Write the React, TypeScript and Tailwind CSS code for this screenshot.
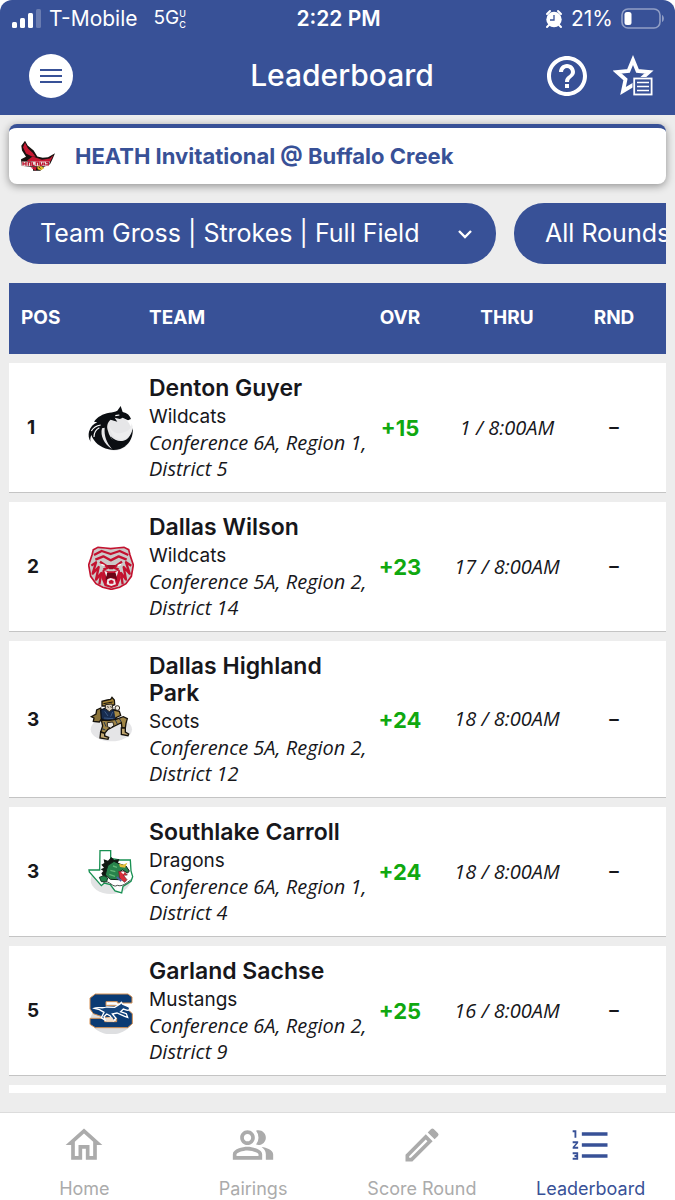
import type { ReactNode } from "react";
import {
  MdFormatListNumbered,
  MdHelpOutline,
  MdOutlineHome,
  MdOutlineModeEdit,
  MdOutlinePeopleAlt,
} from "react-icons/md";

interface Team {
  pos: number;
  name: string;
  mascot: string;
  division: string;
  overall: string;
  thru: string;
  logo: ReactNode;
}

function GuyerLogo() {
  return (
    <svg viewBox="24 30 138 138" className="size-[46px]" aria-hidden="true">
      <circle cx="103" cy="114" r="53" fill="#e6e6e8" />
      <path d="M27 110 C31 96 40 87 52 82 L42 80 C52 66 68 56 88 53 C97 52 106 50 112 47 L122 33 L128 51 C142 54 150 62 153 72 L144 76 L128 68 L120 72 L104 68 L112 80 L92 74 C82 82 79 94 84 108 C90 132 108 150 138 152 C124 163 104 168 86 163 C60 157 42 142 34 120 C30 130 30 136 33 142 C25 130 25 119 27 110Z" fill="#0b0e12" />
      <path d="M158 98 C161 122 150 144 134 154 C112 152 98 142 92 124 C104 138 124 142 138 134 C150 126 156 112 158 98Z" fill="#0b0e12" />
      <path d="M88 92 C94 110 112 120 132 112 C146 108 154 98 155 84 L158 96 C154 120 142 132 126 134 C106 134 90 116 88 92Z" fill="#ededee" />
      <path d="M66 100 C60 122 72 148 96 162 C80 142 72 124 74 98Z" fill="#e6e6e8" />
      <path d="M34 108 C40 98 50 92 62 90 M42 126 C42 112 48 103 58 98 M106 62 L118 60" fill="none" stroke="#fff" strokeWidth="3.5" />
    </svg>
  );
}

function WilsonLogo() {
  return (
    <svg viewBox="24 27 138 138" className="size-[46px]" aria-hidden="true">
      <path d="M40 44 L54 37 L76 39 L92 41 L109 39 L132 37 L146 44 L150 60 L160 90 L154 124 L138 146 L119 157 L94 163 L68 157 L48 146 L32 124 L26 90 L36 60Z" fill="#cbcac9" stroke="#c3122f" strokeWidth="5" />
      <g fill="none" stroke="#c3122f" strokeWidth="7" strokeLinejoin="round">
        <path d="M42 60 L65 48 L92 57 L119 48 L145 60" />
        <path d="M46 74 L70 64 L92 76 L116 64 L140 74" />
        <path d="M60 80 L78 92 L84 98 L70 104 M126 80 L109 92 L102 98 L116 104" />
        <path d="M34 92 L48 82 L38 116 L56 96 L48 134 L64 114 L58 148" />
        <path d="M154 92 L138 82 L149 116 L131 96 L138 134 L123 114 L128 148" />
      </g>
      <path d="M80 90 L107 90 L99 103 L88 103Z" fill="#9f1029" />
      <path d="M68 104 L86 109 L101 109 L119 104 L123 128 L113 153 L94 159 L74 153 L64 128Z" fill="#c3122f" />
      <path d="M78 114 L109 114 L111 137 L104 130 L86 130 L77 137Z" fill="#6b0718" />
      <path d="M73 107 L82 111 L79 125Z M106 111 L115 107 L110 125Z M82 133 L92 129 L104 133 L108 148 L94 153 L80 148Z" fill="#eee" />
      <path d="M86 138 L94 134 L101 138 L100 146 L88 146Z" fill="#c3122f" />
      <path d="M64 88 L74 92 M113 92 L123 88" stroke="#fff" strokeWidth="4" />
    </svg>
  );
}

function HighlandLogo() {
  return (
    <svg viewBox="24 30 138 138" className="size-[46px]" aria-hidden="true">
      <ellipse cx="94" cy="130" rx="62" ry="36" fill="#e5e5e7" />
      <path d="M62 66 L50 72 L48 84 L34 92 L42 96 L40 106 L58 108 L70 92Z" fill="#8b743b" stroke="#17130c" strokeWidth="4" />
      <path d="M62 72 L78 66 L104 72 L112 84 L106 104 L78 108 L64 98Z" fill="#172c4f" stroke="#0b101a" strokeWidth="4" />
      <path d="M66 60 L66 46 L82 42 L92 40 L96 34 L103 42 L104 56 L92 60Z" fill="#a88635" stroke="#19150e" strokeWidth="4" />
      <path d="M76 56 L96 54 L99 68 L88 77 L76 68Z" fill="#d8cdbb" stroke="#2b251a" strokeWidth="3" />
      <path d="M102 72 L118 76 L122 88 L106 96" fill="#a68a45" stroke="#17130c" strokeWidth="4" />
      <circle cx="112" cy="66" r="7" fill="#f4efe4" stroke="#33291c" strokeWidth="3" />
      <path d="M64 102 L84 104 L108 100 L130 92 L142 98 L138 112 L136 126 L126 126 L124 110 L104 120 L84 130 L74 142 L62 138 L68 120Z" fill="#a08546" stroke="#17130c" strokeWidth="4" />
      <path d="M124 126 L136 126 L136 138 L146 144 L144 149 L124 145Z M62 138 L74 142 L74 150 L86 154 L84 160 L60 156Z" fill="#c0a670" stroke="#17130c" strokeWidth="4" />
      <path d="M82 110 L98 108 L102 118 L92 126 L82 122Z" fill="#e9e5dc" stroke="#25201a" strokeWidth="3" />
      <path d="M72 108 L78 122 M106 102 L112 114 M118 98 L124 108 M66 128 L76 132" stroke="#28384f" strokeWidth="3" fill="none" />
      <path d="M74 76 L84 90 M98 78 L92 92 M72 96 L100 98" stroke="#3d5b86" strokeWidth="3" fill="none" />
      <path d="M70 53 L98 48 M82 62 L86 64 M91 62 L95 64" stroke="#19150e" strokeWidth="3" />
    </svg>
  );
}

function CarrollLogo() {
  return (
    <svg viewBox="24 25 138 138" className="size-[46px]" aria-hidden="true">
      <ellipse cx="92" cy="118" rx="60" ry="42" fill="#e2e3e4" />
      <path d="M60 30 L92 30 L92 53 L118 58 L151 58 L153 91 L158 108 L153 122 L129 137 L125 157 L105 151 L91 132 L73 127 L64 135 L51 120 L28 94 L27 88 L59 88Z" fill="#fff" stroke="#189052" strokeWidth="4" />
      <path d="M64 72 L73 67 L71 56 L84 60 L94 49 L103 58 L118 55 L114 67 L130 74 L108 75 L93 87 L82 108 L70 110 L64 98 L70 91 L62 86 L72 81Z" fill="#121913" />
      <path d="M84 74 L102 62 L119 70 L138 76 L148 91 L143 97 L127 88 L118 94 L131 107 L116 117 L91 116 L76 103 L80 86Z" fill="#28834c" stroke="#102017" strokeWidth="3" />
      <path d="M99 76 L111 80 M91 89 L106 93 M88 101 L105 107" stroke="#63b878" strokeWidth="4" />
      <path d="M117 69 L130 72 L142 66 L135 81 L120 79Z" fill="#e5bd38" />
      <path d="M116 92 L134 94 L142 103 L130 104 L141 117 L134 125 L119 113Z" fill="#d92d3a" stroke="#662029" strokeWidth="2" />
      <path d="M122 93 L130 101 L134 94" fill="#fff" />
      <path d="M110 109 L124 121" stroke="#4a65a2" strokeWidth="5" />
      <path d="M58 110 L72 105 L83 112 L80 123 L64 123Z" fill="#23844b" stroke="#143b24" strokeWidth="3" />
      <path d="M70 125 C89 116 98 144 112 134 C127 139 139 127 152 118" fill="none" stroke="#454b47" strokeWidth="3" />
    </svg>
  );
}

function SachseLogo() {
  return (
    <svg viewBox="24 21 138 138" className="size-[46px]" aria-hidden="true">
      <ellipse cx="94" cy="115" rx="62" ry="45" fill="#dedfe1" />
      <path d="M46 39 H144 L156 48 V66 H112 V62 H78 V74 H119 L144 86 L157 98 V128 L143 140 H46 L30 130 V112 H74 V122 H110 V112 L69 108 L40 98 L30 84 V51Z" fill="#0b3b73" stroke="#d69254" strokeWidth="3" />
      <path d="M42 82 C54 76 66 84 80 78 L104 79 L120 69 L124 64 L128 70 L147 78 L150 86 L142 88 L130 84 L122 92 L139 98 L143 109 L134 106 L111 96 L97 99 L108 112 L100 120 L90 104 L80 99 L72 107 L76 118 L64 110 L72 94 L58 86Z" fill="#14457e" stroke="#fff" strokeWidth="4" />
      <path d="M80 110 L96 108 L104 122 H80Z" fill="#f3dfcb" />
    </svg>
  );
}

function CardinalLogo() {
  return (
    <svg viewBox="27 27 111 95" className="h-8 w-[37px]" aria-hidden="true">
      <path d="M45 29 L53 43 L71 58 L82 76 L98 80 L114 78 L135 66 L127 85 L120 99 L103 107 L91 119 L69 119 L69 108 L35 104 L33 84 L48 77 L36 58 L34 44Z" fill="#17110f" />
      <path d="M45 35 L54 52 L68 65 L77 77 L66 76 L48 67 L39 48Z" fill="#c71832" />
      <path d="M68 76 L96 86 L119 82 L130 72 L121 91 L92 95 L50 89Z" fill="#c71832" />
      <path d="M35 91 H120 L116 105 H35Z" fill="#e9dcd9" />
      <path d="M39 92 V103 M39 98 H48 V92 V104 M55 104 V93 H62 V104 M67 93 V103 H74 M79 103 V93 H86 V103 M91 93 V103 L98 101 V94 M103 94 V103 M108 94 H115 V101 H106" stroke="#be1b35" strokeWidth="4" fill="none" />
      <path d="M82 106 L94 105 L103 111 L92 117 L83 114Z" fill="#e4c02d" />
      <path d="M62 109 L80 107 L77 119Z" fill="#c71832" />
      <path d="M87 108 L91 112" stroke="#17110f" strokeWidth="3" />
    </svg>
  );
}

const TEAMS: Team[] = [
  { pos: 1, name: "Denton Guyer", mascot: "Wildcats", division: "Conference 6A, Region 1, District 5", overall: "+15", thru: "1 / 8:00AM", logo: <GuyerLogo /> },
  { pos: 2, name: "Dallas Wilson", mascot: "Wildcats", division: "Conference 5A, Region 2, District 14", overall: "+23", thru: "17 / 8:00AM", logo: <WilsonLogo /> },
  { pos: 3, name: "Dallas Highland Park", mascot: "Scots", division: "Conference 5A, Region 2, District 12", overall: "+24", thru: "18 / 8:00AM", logo: <HighlandLogo /> },
  { pos: 3, name: "Southlake Carroll", mascot: "Dragons", division: "Conference 6A, Region 1, District 4", overall: "+24", thru: "18 / 8:00AM", logo: <CarrollLogo /> },
  { pos: 5, name: "Garland Sachse", mascot: "Mustangs", division: "Conference 6A, Region 2, District 9", overall: "+25", thru: "16 / 8:00AM", logo: <SachseLogo /> },
];

const TABS = [
  { label: "Home", icon: MdOutlineHome },
  { label: "Pairings", icon: MdOutlinePeopleAlt },
  { label: "Score Round", icon: MdOutlineModeEdit },
  { label: "Leaderboard", icon: MdFormatListNumbered },
];

function StatusBar() {
  return (
    <div className="grid h-[37px] grid-cols-[1fr_auto_1fr] items-center pl-3 pr-[10px] text-[21px]">
      <div className="flex items-center">
        <svg viewBox="0 0 30 20" className="h-5 w-[30px]" fill="#fff" aria-hidden="true">
          <rect x="0" y="13" width="5" height="6" rx="1.5" />
          <rect x="8" y="9" width="5" height="10" rx="1.5" />
          <rect x="16" y="4" width="5" height="15" rx="1.5" />
          <rect x="24" y="0" width="5" height="19" rx="1.5" opacity="0.25" />
        </svg>
        <span className="ml-[7px]">T-Mobile</span>
        <span className="ml-4 text-[19px]">5G</span>
        <span className="flex flex-col text-[9px] font-medium leading-[11px]">
          <span>U</span>
          <span>C</span>
        </span>
      </div>
      <div className="font-semibold">2:22 PM</div>
      <div className="flex items-center justify-end">
        <svg viewBox="0 0 18 20" className="h-5 w-[18px]" aria-hidden="true">
          <path d="M2 5 L5 2 M16 5 L13 2 M4 16 L2 18 M14 16 L16 18" stroke="#fff" strokeWidth="2" strokeLinecap="round" />
          <circle cx="9" cy="10.5" r="7.7" fill="#fff" />
          <path d="M9 6 V11 H5" fill="none" stroke="#385197" strokeWidth="1.3" />
        </svg>
        <span className="ml-2">21%</span>
        <svg viewBox="0 0 44 22" className="ml-2 h-[22px] w-11" aria-hidden="true">
          <rect x="1" y="1" width="38" height="19" rx="6" fill="none" stroke="#fff" strokeWidth="1.6" opacity="0.45" />
          <path d="M41 7 C43.5 8 43.5 13 41 14Z" fill="#fff" opacity="0.45" />
          <rect x="3.5" y="4" width="7" height="13" rx="2.5" fill="#fff" />
        </svg>
      </div>
    </div>
  );
}

function Header() {
  return (
    <header className="shrink-0 rounded-t-xl bg-[#385197] text-white">
      <StatusBar />
      <div className="grid h-[78px] grid-cols-[1fr_auto_1fr] items-center pl-[29px] pr-5">
        <button aria-label="Menu" className="flex size-11 items-center justify-center rounded-full bg-white">
          <svg viewBox="0 0 22 16" className="h-4 w-[22px]" aria-hidden="true">
            <path d="M0 2 H22 M0 8 H22 M0 14 H22" stroke="#385197" strokeWidth="2" />
          </svg>
        </button>
        <h1 className="pb-[2px] text-[30px] font-medium leading-9">Leaderboard</h1>
        <div className="flex items-center justify-end gap-[22px]">
          <button aria-label="Help">
            <MdHelpOutline className="size-12" />
          </button>
          <button aria-label="Favorites">
            <svg viewBox="0 0 42 42" className="size-[42px]" aria-hidden="true">
              <path d="M20 5 L24.5 16 L36 17 L27.5 24.5 L30 36 L20 30 L10 36 L12.5 24.5 L4 17 L15.5 16Z" fill="none" stroke="#fff" strokeWidth="3.8" />
              <rect x="19.5" y="22" width="21" height="20" fill="#385197" />
              <rect x="21.2" y="23.5" width="17.4" height="16" fill="#385197" stroke="#fff" strokeWidth="1.8" />
              <path d="M24 27.5 H36 M24 31.5 H36 M24 35.5 H36" stroke="#fff" strokeWidth="1.7" />
            </svg>
          </button>
        </div>
      </div>
    </header>
  );
}

function FilterSelect({ label, value, width }: { label: string; value: string; width: string }) {
  return (
    <div className={`relative shrink-0 ${width}`}>
      <select
        aria-label={label}
        className="h-[61px] w-full appearance-none rounded-[30px] bg-[#385197] pl-[31px] pr-14 text-[25px] text-white"
      >
        <option>{value}</option>
      </select>
      <svg viewBox="0 0 16 10" className="pointer-events-none absolute right-[23px] top-[26px] h-[10px] w-4" aria-hidden="true">
        <path d="M2 2 L8 8 L14 2" fill="none" stroke="#fff" strokeWidth="2.4" />
      </svg>
    </div>
  );
}

function TeamRow({ team }: { team: Team }) {
  const cell = "border-b border-[#c4c4c4] bg-white";
  return (
    <tr>
      <td className={`${cell} pl-[18px] pt-[2px] text-[19px] font-bold`}>{team.pos}</td>
      <td className={cell}>{team.logo}</td>
      <td className={`${cell} pb-[10px] pt-3 text-[19px] leading-[26px]`}>
        <p className="mb-[2px] text-[23px] font-semibold leading-[27px]">{team.name}</p>
        <p>{team.mascot}</p>
        <p className="font-['Open_Sans',sans-serif] text-xl leading-[26px] italic">{team.division}</p>
      </td>
      <td className={`${cell} pt-[2px] text-center text-[22px] font-bold text-[#10a810]`}>{team.overall}</td>
      <td className={`${cell} text-center font-['Open_Sans',sans-serif] text-xl italic`}>{team.thru}</td>
      <td className={`${cell} pr-5 pt-[2px] text-center text-[19px] font-semibold`}>–</td>
    </tr>
  );
}

export default function App() {
  return (
    <div className="flex h-screen flex-col overflow-hidden bg-white font-['Inter',sans-serif] text-[#17171b]">
      <Header />

      <main className="flex min-h-0 flex-1 flex-col bg-[#ededed] px-[9px] pb-[19px] pt-[9px]">
        <section className="flex h-[60px] shrink-0 items-center gap-[19px] rounded-lg border-t-4 border-[#385197] bg-white pl-[10px] shadow-[0_2px_8px_rgba(0,0,0,0.4)]">
          <CardinalLogo />
          <h2 className="text-[22px] font-bold text-[#385197]">HEATH Invitational @ Buffalo Creek</h2>
        </section>

        <div className="mt-[19px] flex shrink-0 gap-[18px] overflow-hidden">
          <FilterSelect label="Scoring format" value="Team Gross | Strokes | Full Field" width="w-[487px]" />
          <FilterSelect label="Round" value="All Rounds" width="w-[230px]" />
        </div>

        <div className="mt-[10px] min-h-0 flex-1 overflow-hidden">
          <table className="w-full table-fixed border-separate border-spacing-x-0 border-spacing-y-[9px]">
            <colgroup>
              <col className="w-[79px]" />
              <col className="w-[61px]" />
              <col />
              <col className="w-16" />
              <col className="w-[150px]" />
              <col className="w-[84px]" />
            </colgroup>
            <thead>
              <tr className="h-[71px] bg-[#385197] text-[19px] text-white">
                <th scope="col" className="pl-3 text-left">POS</th>
                <td />
                <th scope="col" className="text-left">TEAM</th>
                <th scope="col">OVR</th>
                <th scope="col">THRU</th>
                <th scope="col" className="pr-5">RND</th>
              </tr>
            </thead>
            <tbody>
              {TEAMS.map((team) => (
                <TeamRow key={team.name} team={team} />
              ))}
              <tr className="h-[130px] bg-white">
                <td colSpan={6} />
              </tr>
            </tbody>
          </table>
        </div>
      </main>

      <nav className="grid h-[88px] shrink-0 grid-cols-4 border-t border-[#dcdcdc] bg-white">
        {TABS.map(({ label, icon: Icon }) => (
          <button
            key={label}
            className={`flex flex-col items-center pt-[10px] text-lg leading-6 ${
              label === "Leaderboard" ? "text-[#385197]" : "text-[#ababab]"
            }`}
          >
            <Icon className="mb-[10px] size-11" />
            {label}
          </button>
        ))}
      </nav>
    </div>
  );
}
